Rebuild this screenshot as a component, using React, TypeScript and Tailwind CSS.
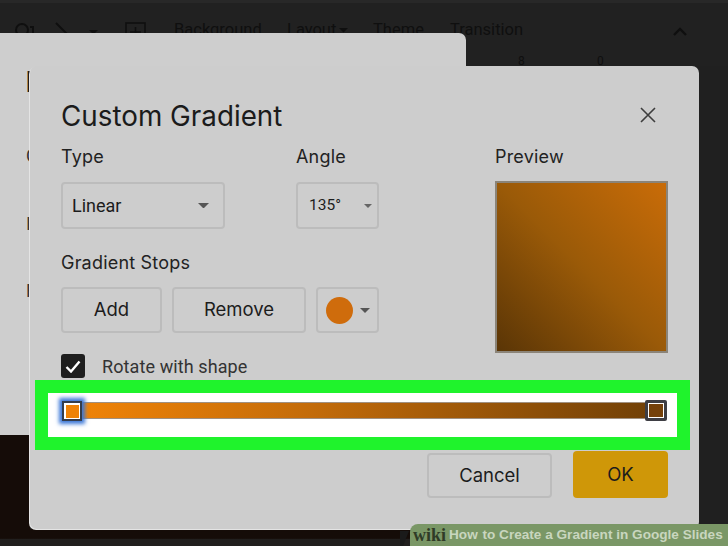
const sans = "font-['Roboto','Liberation_Sans',sans-serif]";
const head = "font-['Inter','Roboto',sans-serif]";
const label = `text-[18px] leading-[22px] tracking-[0.2px] text-[#222] ${head}`;

function Caret({ size = 10, color = "#555" }: { size?: number; color?: string }) {
  return (
    <svg width={size} height={size / 2} viewBox="0 0 10 5" className="shrink-0">
      <path d="M0 0h10L5 5z" fill={color} />
    </svg>
  );
}

function Outline({ className, children }: { className: string; children: React.ReactNode }) {
  return (
    <div className={`flex items-center rounded-[4px] border-2 border-[#bcbcbc] text-[#1c1c1c] ${className}`}>
      {children}
    </div>
  );
}

function Toolbar() {
  const muted = `text-[#0f0f0f] text-[16.5px] leading-none ${sans}`;
  return (
    <div className="flex h-[66px] items-start border-t-[3px] border-[#282828] bg-[#212121] pl-[15px] pr-[40px] pt-[19px]">
      <svg width="20" height="16" viewBox="0 0 20 16" className="mr-[20px]" fill="none" stroke="#0f0f0f" strokeWidth="2">
        <circle cx="7" cy="8" r="6" />
        <path d="M15 5h3v11" />
      </svg>
      <svg width="14" height="14" viewBox="0 0 14 14" className="mr-[20px]" fill="none" stroke="#0f0f0f" strokeWidth="2">
        <path d="M1 1l12 12" />
      </svg>
      <div className="mr-[27px] mt-[8px]"><Caret size={9} color="#0f0f0f" /></div>
      <svg width="21" height="20" viewBox="0 0 21 20" className="mr-[28px]" fill="none" stroke="#0f0f0f" strokeWidth="1.6">
        <rect x="1" y="1" width="19" height="18" />
        <path d="M10.500 5v10M5 10h11" />
      </svg>
      <span className={`${muted} w-[113px]`}>Background</span>
      <span className={`${muted} flex w-[86px] items-center gap-[3px]`}>Layout<Caret size={9} color="#0f0f0f" /></span>
      <span className={`${muted} w-[77px]`}>Theme</span>
      <span className={muted}>Transition</span>
      <svg width="16" height="10" viewBox="0 0 16 10" className="ml-auto mt-[4px]" fill="none" stroke="#0f0f0f" strokeWidth="2.4">
        <path d="M2 9l6-6 6 6" />
      </svg>
    </div>
  );
}

function FrontDialog() {
  return (
    <div className={`absolute left-[30px] top-[66px] h-[463px] w-[669px] rounded-[7px] bg-[#cdcdcd] px-[31px] pt-[32px] shadow-[-1px_1px_0_#e4e4e4] ${sans}`}>
      <div className="flex items-start justify-between pr-[12px]">
        <h2 className={`text-[27.8px] leading-[36px] font-normal text-[#1b1b1b] ${head}`}>Custom Gradient</h2>
        <svg width="16" height="16" viewBox="0 0 16 16" className="mt-[9px]" fill="none" stroke="#3d3d3d" strokeWidth="1.6">
          <path d="M1 1l14 14M15 1L1 15" />
        </svg>
      </div>

      <div className="mt-[12px] flex">
        <div className="w-[434px]">
          <div className="flex">
            <div className="w-[235px]">
              <div className={label}>Type</div>
              <Outline className="mt-[14px] h-[47px] w-[164px] justify-between pl-[9px] pr-[14px] text-[18px]">
                <span>Linear</span>
                <Caret size={11} color="#555" />
              </Outline>
            </div>
            <div>
              <div className={label}>Angle</div>
              <Outline className="mt-[14px] h-[47px] w-[83px] justify-between pl-[11px] pr-[5px] text-[15.5px]">
                <span>135°</span>
                <Caret size={8} color="#666" />
              </Outline>
            </div>
          </div>

          <div className={`mt-[23px] ${label}`}>Gradient Stops</div>
          <div className="mt-[13px] flex gap-[10px]">
            <Outline className={`h-[46px] w-[101px] justify-center text-[18.5px] ${head}`}>Add</Outline>
            <Outline className={`h-[46px] w-[134px] justify-center text-[18.5px] ${head}`}>Remove</Outline>
            <Outline className="h-[46px] w-[63px] gap-[7px] pl-[8px]">
              <div className="h-[27px] w-[27px] rounded-full bg-[#cf6c0c]" />
              <Caret size={10} color="#555" />
            </Outline>
          </div>

          <div className="mt-[21px] flex items-center gap-[17px]">
            <div className="flex h-[24px] w-[24px] items-center justify-center rounded-[3px] bg-[#1e1e1e]">
              <svg width="16" height="13" viewBox="0 0 16 13" fill="none" stroke="#fff" strokeWidth="2.4">
                <path d="M1.500 7l4.500 4.500L14.500 1.500" />
              </svg>
            </div>
            <span className="mt-[2px] text-[18px] leading-[22px] tracking-[0.1px] text-[#333]">Rotate with shape</span>
          </div>
        </div>

        <div className="ml-[2px]">
          <div className={label}>Preview</div>
          <div className="mt-[13px] h-[172px] w-[173px] border-2 border-[#8b8478] bg-[linear-gradient(to_top_right,#5a3506,#9a5a08_50%,#c96c08)]" />
        </div>
      </div>

      <div className="absolute left-[5px] top-[314px] h-[70px] w-[655px] border-[13px] border-[#1ff32c] bg-white">
        <div className="absolute left-[22px] top-[9px] h-[17px] w-[590px] border-y border-[#a09080] bg-[linear-gradient(to_right,#f18407,#c46c0a_40%,#6f3f07)]" />
        <div className="absolute left-[14px] top-[8px] flex h-[20px] w-[20px] items-center justify-center border-[2px] border-[#333c4c] bg-white shadow-[0_0_4px_3px_#3c78d8]">
          <div className="h-[13px] w-[13px] bg-[#ee8207]" />
        </div>
        <div className="absolute left-[597px] top-[7px] flex h-[21px] w-[22px] items-center justify-center rounded-[2px] border-[3px] border-[#3e3e44] bg-white">
          <div className="h-[13px] w-[14px] bg-[#75410a]" />
        </div>
      </div>

      <div className={`absolute right-[31px] top-[385px] flex items-start gap-[21px] ${head}`}>
        <Outline className="mt-[2px] h-[45px] w-[125px] justify-center text-[18.5px]">Cancel</Outline>
        <div className="flex h-[47px] w-[95px] items-center justify-center rounded-[4px] bg-[#cf9708] text-[18.5px] text-[#1c1c1c]">OK</div>
      </div>
    </div>
  );
}

export default function App() {
  return (
    <div className="relative h-[546px] w-[728px] overflow-hidden bg-[#202020]">
      <Toolbar />
      <span className={`absolute left-[518px] top-[55px] text-[12px] leading-none text-[#0f0f0f] ${sans}`}>8</span>
      <span className={`absolute left-[597px] top-[55px] text-[12px] leading-none text-[#0f0f0f] ${sans}`}>0</span>

      <div className={`absolute left-0 top-[33px] h-[402px] w-[466px] rounded-tr-[7px] bg-[#cecece] ${sans}`}>
        <div className="pl-[25px] pt-[36px] text-[29px] leading-[26px] text-[#1b1b1b]">I</div>
        <div className="pl-[26px] pt-[48px] text-[18px] leading-[26px] text-[#333]">C</div>
        <div className="pl-[26px] pt-[42px] text-[18px] leading-[26px] text-[#333]">I</div>
        <div className="pl-[26px] pt-[41px] text-[18px] leading-[26px] text-[#333]">F</div>
      </div>
      <div className="absolute left-0 top-[435px] h-[94px] w-[30px] bg-[#150c08]" />
      <div className="absolute bottom-0 left-0 h-[17px] w-[410px] bg-[linear-gradient(to_bottom,#150c08_55%,#211f1e_60%)]" />

      <FrontDialog />

      <svg width="10" height="16" viewBox="0 0 10 16" className="absolute bottom-0 left-[400px]">
        <path d="M0 1h9L3 16H0z" fill="#1a1a1a" />
      </svg>
      <div className="absolute bottom-0 right-0 flex h-[22px] w-[318px] items-center gap-[3px] rounded-tl-[8px] bg-[#7a9766] pl-[3px] font-['Liberation_Sans',sans-serif] text-[13.6px] font-bold text-[#c9d6bf]">
        <span className="font-['Liberation_Serif',serif] text-[18px] leading-none text-[#2f3b26]">wiki</span>
        <span>How <span className="ml-[1px]">to Create a Gradient in Google Slides</span></span>
      </div>
    </div>
  );
}
